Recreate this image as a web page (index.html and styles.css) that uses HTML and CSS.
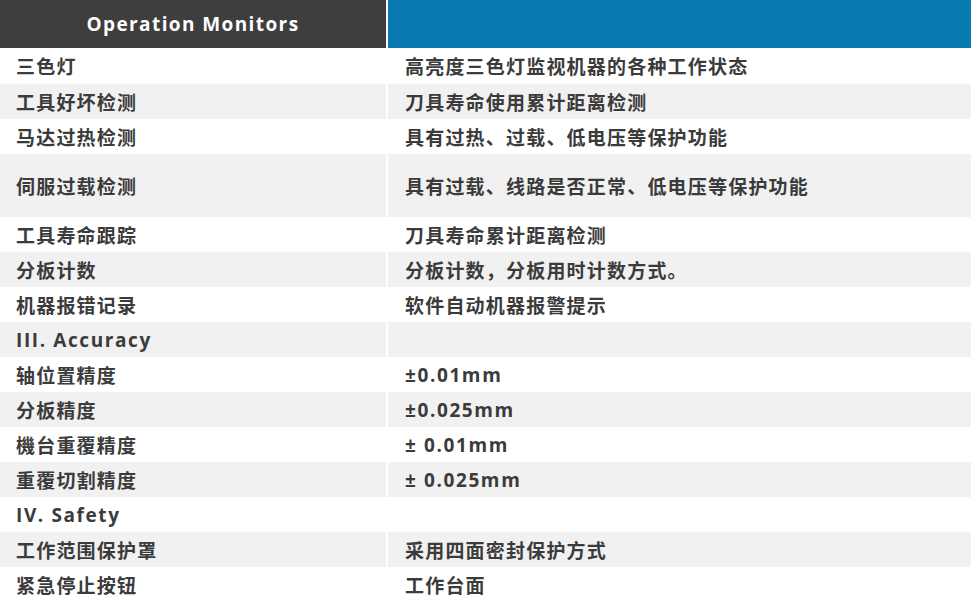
FILE: index.html
```html
<!DOCTYPE html>
<html lang="zh">
<head>
<meta charset="utf-8">
<title>Operation Monitors</title>
<link rel="stylesheet" href="styles.css">
</head>
<body>
<div class="spec">
  <div class="row head">
    <div class="cell title">Operation Monitors</div>
    <div class="cell blue"></div>
  </div>
  <div class="row first"><div class="cell">三色灯</div><div class="cell val">高亮度三色灯监视机器的各种工作状态</div></div>
  <div class="row alt"><div class="cell">工具好坏检测</div><div class="cell val">刀具寿命使用累计距离检测</div></div>
  <div class="row"><div class="cell">马达过热检测</div><div class="cell val">具有过热、过载、低电压等保护功能</div></div>
  <div class="row alt tall"><div class="cell">伺服过载检测</div><div class="cell val">具有过载、线路是否正常、低电压等保护功能</div></div>
  <div class="row"><div class="cell">工具寿命跟踪</div><div class="cell val">刀具寿命累计距离检测</div></div>
  <div class="row alt"><div class="cell">分板计数</div><div class="cell val">分板计数，分板用时计数方式。</div></div>
  <div class="row"><div class="cell">机器报错记录</div><div class="cell val">软件自动机器报警提示</div></div>
  <div class="row alt"><div class="cell latin">III. Accuracy</div><div class="cell val"></div></div>
  <div class="row"><div class="cell">轴位置精度</div><div class="cell val latin">±0.01mm</div></div>
  <div class="row alt"><div class="cell">分板精度</div><div class="cell val latin">±0.025mm</div></div>
  <div class="row"><div class="cell">機台重覆精度</div><div class="cell val latin">± 0.01mm</div></div>
  <div class="row alt"><div class="cell">重覆切割精度</div><div class="cell val latin">± 0.025mm</div></div>
  <div class="row"><div class="cell latin">IV. Safety</div><div class="cell val"></div></div>
  <div class="row alt"><div class="cell">工作范围保护罩</div><div class="cell val">采用四面密封保护方式</div></div>
  <div class="row"><div class="cell">紧急停止按钮</div><div class="cell val">工作台面</div></div>
</div>
</body>
</html>
```

FILE: styles.css
```css
html, body {
  margin: 0;
  padding: 0;
  background: #ffffff;
}

.spec {
  width: 971px;
  font-family: "Open Sans", "Noto Sans CJK SC", sans-serif;
  font-weight: 700;
  font-size: 19px;
  color: #3b3b3b;
}

.row {
  display: grid;
  grid-template-columns: 386px 1fr;
  column-gap: 2px;
  height: 35px;
}

.row.first { height: 36px; }
.row.tall { height: 63px; }

.row.alt .cell { background: #f1f1f1; }

.cell {
  display: flex;
  align-items: center;
  padding-left: 16px;
  letter-spacing: 1.2px;
}

.cell.val { padding-left: 17px; }

.cell.latin {
  letter-spacing: 1.6px;
}

.row.head { height: 48px; }

.cell.title {
  background: #3e3e3e;
  color: #ffffff;
  justify-content: center;
  padding-left: 0;
  font-size: 19px;
  letter-spacing: 1.4px;
}

.cell.blue {
  background: #0a7ab2;
}
```
